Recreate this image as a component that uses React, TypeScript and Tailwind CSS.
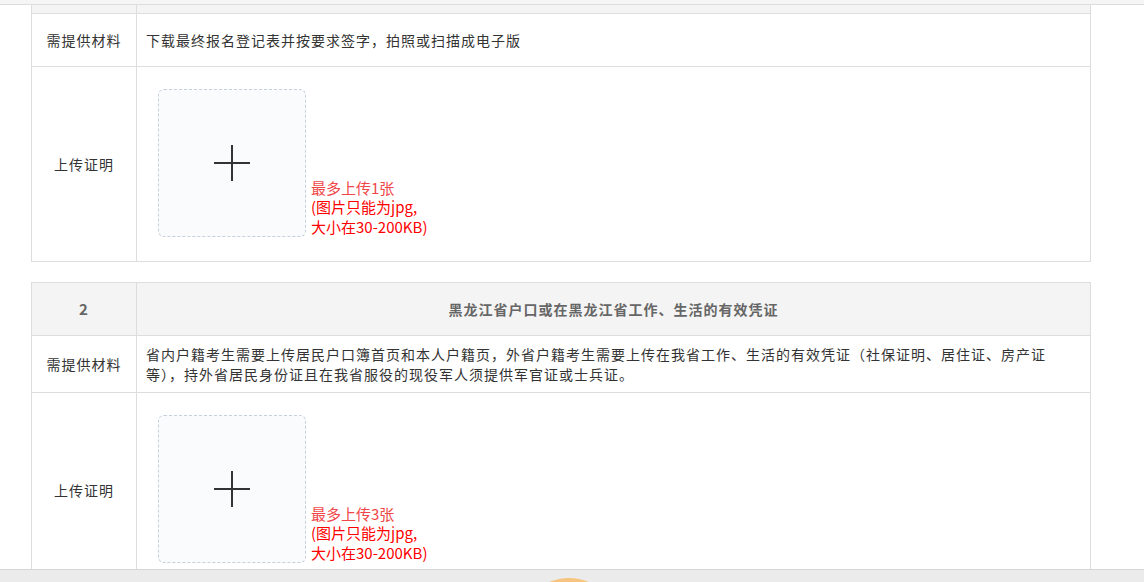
const font = { fontFamily: '"Noto Sans CJK SC", "Noto Sans", sans-serif' };

function PlusIcon() {
  return (
    <svg width="36" height="36" viewBox="0 0 36 36" className="text-[#333]">
      <path d="M0 18H36M18 0V36" stroke="currentColor" strokeWidth="2" fill="none" />
    </svg>
  );
}

function UploadBox({ max }: { max: number }) {
  return (
    <div className="flex items-end">
      <div className="w-[148px] h-[148px] rounded-[6px] border border-dashed border-[#c6cfdc] bg-[#fafbfd] flex items-center justify-center">
        <PlusIcon />
      </div>
      <div className="ml-[5px] mb-[1px] text-[15px] leading-[19.5px] text-[#ff0000]">
        <p className="text-[#f04848]">最多上传{max}张</p>
        <p>(图片只能为jpg,</p>
        <p>大小在30-200KB)</p>
      </div>
    </div>
  );
}

function Label({ children }: { children: React.ReactNode }) {
  return (
    <div className="w-[105px] shrink-0 border-r border-[#ddd] flex items-center justify-center text-[14px] tracking-[1px] text-[#333]">
      {children}
    </div>
  );
}

export default function App() {
  return (
    <div className="relative h-[582px] overflow-hidden bg-white" style={font}>
      {/* top bar */}
      <div className="h-[5px] bg-[#f5f5f5] border-b border-[#ddd]" />

      <div className="pl-[31px]">
        {/* section 1 (scrolled) */}
        <div className="w-[1060px] border-x border-b border-[#ddd]">
          <div className="flex h-[9px] bg-[#f4f4f4] border-b border-[#ddd]">
            <div className="w-[105px] border-r border-[#ddd]" />
            <div className="flex-1" />
          </div>
          <div className="flex h-[53px] border-b border-[#ddd]">
            <Label>需提供材料</Label>
            <div className="flex-1 flex items-center px-[9px] text-[14px] tracking-[1px] text-[#333]">
              下载最终报名登记表并按要求签字，拍照或扫描成电子版
            </div>
          </div>
          <div className="flex h-[194px]">
            <Label>上传证明</Label>
            <div className="flex-1 pl-[21px] pt-[22px]">
              <UploadBox max={1} />
            </div>
          </div>
        </div>

        {/* section 2 */}
        <div className="mt-[20px] w-[1060px] border border-[#ddd]">
          <div className="flex h-[53px] bg-[#f4f4f4] border-b border-[#ddd] text-[14px] tracking-[1px] font-bold text-[#666]">
            <div className="w-[105px] shrink-0 border-r border-[#ddd] flex items-center justify-center text-[15px]">2</div>
            <div className="flex-1 flex items-center justify-center">黑龙江省户口或在黑龙江省工作、生活的有效凭证</div>
          </div>
          <div className="flex h-[57px] border-b border-[#ddd]">
            <Label>需提供材料</Label>
            <div className="flex-1 flex items-center pl-[9px] pr-[30px] text-[14px] leading-[20px] tracking-[1px] text-[#333]">
              省内户籍考生需要上传居民户口簿首页和本人户籍页，外省户籍考生需要上传在我省工作、生活的有效凭证（社保证明、居住证、房产证等），持外省居民身份证且在我省服役的现役军人须提供军官证或士兵证。
            </div>
          </div>
          <div className="flex h-[194px]">
            <Label>上传证明</Label>
            <div className="flex-1 pl-[21px] pt-[22px]">
              <UploadBox max={3} />
            </div>
          </div>
        </div>
      </div>

      {/* bottom bar */}
      <div className="absolute left-0 right-0 bottom-0 h-[13px] bg-[#ebebeb] border-t border-[#d6d6d6]" />
      <div className="absolute left-[519px] top-[578px] w-[100px] h-[100px] rounded-full bg-[#f6c47e]" />
    </div>
  );
}
